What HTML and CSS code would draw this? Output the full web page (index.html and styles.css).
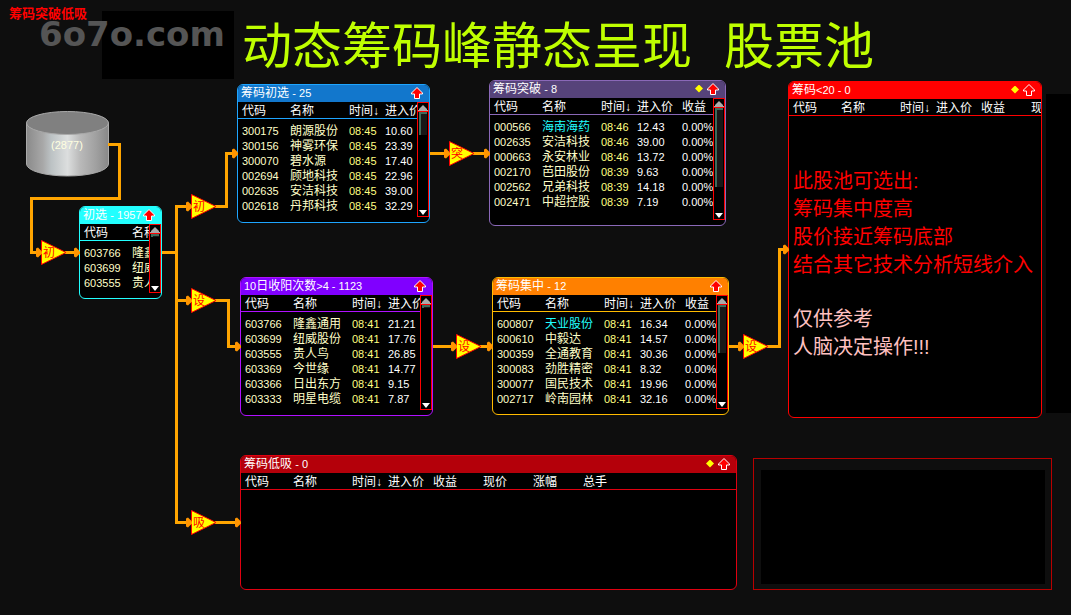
FILE: index.html
```html
<!DOCTYPE html>
<html lang="zh-CN">

<head>
	<meta charset="utf-8">
	<meta name="viewport" content="width=device-width, initial-scale=1.0">
	<title>筹码突破低吸</title>
	<link rel="stylesheet" href="styles.css">
</head>

<body>
	<svg class="defs" aria-hidden="true">
		<symbol id="up" viewBox="0 0 12 12">
			<path d="M6 0.500 L11.500 6 V7 H8.500 V11.500 H3.500 V7 H0.500 V6 Z" stroke-width="1"/>
		</symbol>
	</svg>

	<main class="board">
		<div class="shade shade-top"></div>
		<div class="shade shade-right"></div>
		<p class="name">筹码突破低吸</p>
		<p class="mark">6o7o.com</p>
		<h1 class="headline"><span>动态筹码峰静态呈现</span> <span>股票池</span></h1>

		<section class="node node-start">
			<h2 class="title"><span class="label">初选 <span class="num">- 1957</span></span><svg class="up"><use href="#up"/></svg></h2>
			<div class="body">
				<div class="list">
					<table>
						<thead><tr><th>代码</th><th>名称</th></tr></thead>
						<tbody>
							<tr><td>603766</td><td>隆鑫通用</td></tr>
							<tr><td>603699</td><td>纽威股份</td></tr>
							<tr><td>603555</td><td>贵人鸟</td></tr>
						</tbody>
					</table>
				</div>
				<div class="scroll"><i class="thumb thumb-min"></i></div>
			</div>
		</section>

		<section class="node node-first">
			<h2 class="title"><span class="label">筹码初选 <span class="num">- 25</span></span><svg class="up"><use href="#up"/></svg></h2>
			<div class="body">
				<div class="list">
					<table>
						<thead><tr><th>代码</th><th>名称</th><th>时间↓</th><th>进入价</th></tr></thead>
						<tbody>
							<tr><td>300175</td><td>朗源股份</td><td>08:45</td><td>10.60</td></tr>
							<tr><td>300156</td><td>神雾环保</td><td>08:45</td><td>23.39</td></tr>
							<tr><td>300070</td><td>碧水源</td><td>08:45</td><td>17.40</td></tr>
							<tr><td>002694</td><td>顾地科技</td><td>08:45</td><td>22.96</td></tr>
							<tr><td>002635</td><td>安洁科技</td><td>08:45</td><td>39.00</td></tr>
							<tr><td>002618</td><td>丹邦科技</td><td>08:45</td><td>32.29</td></tr>
						</tbody>
					</table>
				</div>
				<div class="scroll"><i class="thumb thumb-short"></i></div>
			</div>
		</section>

		<section class="node node-break">
			<h2 class="title"><span class="label">筹码突破 <span class="num">- 8</span></span><i class="dot"></i><svg class="up"><use href="#up"/></svg></h2>
			<div class="body">
				<div class="list">
					<table>
						<thead><tr><th>代码</th><th>名称</th><th>时间↓</th><th>进入价</th><th>收益</th></tr></thead>
						<tbody>
							<tr class="new"><td>000566</td><td>海南海药</td><td>08:46</td><td>12.43</td><td>0.00%</td></tr>
							<tr><td>002635</td><td>安洁科技</td><td>08:46</td><td>39.00</td><td>0.00%</td></tr>
							<tr><td>000663</td><td>永安林业</td><td>08:46</td><td>13.72</td><td>0.00%</td></tr>
							<tr><td>002170</td><td>芭田股份</td><td>08:39</td><td>9.63</td><td>0.00%</td></tr>
							<tr><td>002562</td><td>兄弟科技</td><td>08:39</td><td>14.18</td><td>0.00%</td></tr>
							<tr><td>002471</td><td>中超控股</td><td>08:39</td><td>7.19</td><td>0.00%</td></tr>
						</tbody>
					</table>
				</div>
				<div class="scroll"><i class="thumb thumb-long"></i></div>
			</div>
		</section>

		<section class="node node-days">
			<h2 class="title"><span class="label"><span class="num">10</span>日收阳次数<span class="num">&gt;4 - 1123</span></span><svg class="up"><use href="#up"/></svg></h2>
			<div class="body">
				<div class="list">
					<table>
						<thead><tr><th>代码</th><th>名称</th><th>时间↓</th><th>进入价</th></tr></thead>
						<tbody>
							<tr><td>603766</td><td>隆鑫通用</td><td>08:41</td><td>21.21</td></tr>
							<tr><td>603699</td><td>纽威股份</td><td>08:41</td><td>17.76</td></tr>
							<tr><td>603555</td><td>贵人鸟</td><td>08:41</td><td>26.85</td></tr>
							<tr><td>603369</td><td>今世缘</td><td>08:41</td><td>14.77</td></tr>
							<tr><td>603366</td><td>日出东方</td><td>08:41</td><td>9.15</td></tr>
							<tr><td>603333</td><td>明星电缆</td><td>08:41</td><td>7.87</td></tr>
						</tbody>
					</table>
				</div>
				<div class="scroll"><i class="thumb thumb-min"></i></div>
			</div>
		</section>

		<section class="node node-focus">
			<h2 class="title"><span class="label">筹码集中 <span class="num">- 12</span></span><svg class="up"><use href="#up"/></svg></h2>
			<div class="body">
				<div class="list">
					<table>
						<thead><tr><th>代码</th><th>名称</th><th>时间↓</th><th>进入价</th><th>收益</th></tr></thead>
						<tbody>
							<tr class="new"><td>600807</td><td>天业股份</td><td>08:41</td><td>16.34</td><td>0.00%</td></tr>
							<tr><td>600610</td><td>中毅达</td><td>08:41</td><td>14.57</td><td>0.00%</td></tr>
							<tr><td>300359</td><td>全通教育</td><td>08:41</td><td>30.36</td><td>0.00%</td></tr>
							<tr><td>300083</td><td>劲胜精密</td><td>08:41</td><td>8.32</td><td>0.00%</td></tr>
							<tr><td>300077</td><td>国民技术</td><td>08:41</td><td>19.96</td><td>0.00%</td></tr>
							<tr><td>002717</td><td>岭南园林</td><td>08:41</td><td>32.16</td><td>0.00%</td></tr>
						</tbody>
					</table>
				</div>
				<div class="scroll"><i class="thumb thumb-mid"></i></div>
			</div>
		</section>

		<section class="node node-under">
			<h2 class="title"><span class="label">筹码<span class="num">&lt;20 - 0</span></span><i class="dot"></i><svg class="up"><use href="#up"/></svg></h2>
			<div class="body">
				<div class="list">
					<table>
						<thead><tr><th>代码</th><th>名称</th><th>时间↓</th><th>进入价</th><th>收益</th><th>现价</th></tr></thead>
					</table>
					<div class="note">
						<p>此股池可选出:<br>筹码集中度高<br>股价接近筹码底部<br>结合其它技术分析短线介入</p>
						<p class="hint">仅供参考<br>人脑决定操作!!!</p>
					</div>
				</div>
			</div>
		</section>

		<section class="node node-low">
			<h2 class="title"><span class="label">筹码低吸 <span class="num">- 0</span></span><i class="dot"></i><svg class="up"><use href="#up"/></svg></h2>
			<div class="body">
				<div class="list">
					<table>
						<thead><tr><th>代码</th><th>名称</th><th>时间↓</th><th>进入价</th><th>收益</th><th>现价</th><th>涨幅</th><th>总手</th></tr></thead>
					</table>
				</div>
			</div>
		</section>

		<div class="blank"></div>

		<svg class="links" width="1071" height="615" viewBox="0 0 1071 615">
			<defs>
				<linearGradient id="steel">
					<stop offset="0" stop-color="#8a8a8a"/>
					<stop offset=".2" stop-color="#a8a8a8"/>
					<stop offset=".3" stop-color="#bcc2c4"/>
					<stop offset=".5" stop-color="#dcdede"/>
					<stop offset=".65" stop-color="#bababa"/>
					<stop offset=".85" stop-color="#a0a0a0"/>
					<stop offset="1" stop-color="#888"/>
				</linearGradient>
				<path id="head" d="M-6 -4 L-4 -5 L0 -1 V1 L-4 5 L-6 4 Z"/>
				<path id="flag" d="M0.5 -12 L25 0 L0.5 12 Z"/>
			</defs>

			<!-- all stocks -->
			<path d="M26.500 123 V164 A41 12 0 0 0 108.500 164 V123 Z" fill="url(#steel)" stroke="#aaa"/>
			<ellipse cx="67.500" cy="123" rx="41" ry="11.500" fill="#808080" stroke="#aaa"/>
			<text class="count" x="67" y="149">(2877)</text>

			<g class="wire">
				<path d="M108 144.500 H119.500 V198.500 H31.500 V252.500 H37"/>
				<path d="M65 252.500 H76"/>
				<path d="M162 252.500 H176.500"/>
				<path d="M187 206.500 H176.500 V522.500 H187"/>
				<path d="M176.500 300.500 H187"/>
				<path d="M215 206.500 H226.500 V153.500 H232"/>
				<path d="M215 300.500 H228.500 V346.500 H236"/>
				<path d="M215 522.500 H236"/>
				<path d="M430 153.500 H445"/>
				<path d="M473 153.500 H485"/>
				<path d="M433 346.500 H452"/>
				<path d="M480 346.500 H488"/>
				<path d="M729 346.500 H739"/>
				<path d="M767 346.500 H779.500 V249.500 H784"/>
			</g>

			<g class="heads">
				<use href="#head" x="80" y="252.500"/>
				<use href="#head" x="238" y="153.500"/>
				<use href="#head" x="241" y="346.500"/>
				<use href="#head" x="241" y="522.500"/>
				<use href="#head" x="490" y="153.500"/>
				<use href="#head" x="493" y="346.500"/>
				<use href="#head" x="789" y="249.500"/>
			</g>

			<g class="flags">
				<use href="#flag" x="41" y="252.500"/>
				<use href="#flag" x="191" y="206.500"/>
				<use href="#flag" x="191" y="300.500"/>
				<use href="#flag" x="191" y="522.500"/>
				<use href="#flag" x="449" y="153.500"/>
				<use href="#flag" x="456" y="346.500"/>
				<use href="#flag" x="743" y="346.500"/>
			</g>

			<g class="heads">
				<use href="#head" x="42" y="252.500"/>
				<use href="#head" x="192" y="206.500"/>
				<use href="#head" x="192" y="300.500"/>
				<use href="#head" x="192" y="522.500"/>
				<use href="#head" x="450" y="153.500"/>
				<use href="#head" x="457" y="346.500"/>
				<use href="#head" x="744" y="346.500"/>
			</g>

			<g class="sign">
				<text x="49" y="257">初</text>
				<text x="199" y="211">初</text>
				<text x="199" y="305">设</text>
				<text x="199" y="527">吸</text>
				<text x="457" y="158">突</text>
				<text x="464" y="351">设</text>
				<text x="751" y="351">设</text>
			</g>
		</svg>
	</main>
</body>

</html>
```
FILE: styles.css
```css
* {
	box-sizing: border-box;
}

body {
	margin: 0;
	background: #0e0e0e;
	color: #fff;
	font: 12px/15px "Liberation Sans", "Noto Sans CJK SC", sans-serif;
}

p, h1, h2 {
	margin: 0;
	font-weight: normal;
}

.defs {
	display: none;
}

.board {
	position: relative;
	min-height: 100vh;
	overflow: hidden;
}

.links {
	position: absolute;
	left: 0;
	top: 0;
}

/* captions */

.name, .mark, .headline, .shade, .blank, .node {
	position: absolute;
}

.name {
	left: 9px;
	top: 6px;
	color: #f00;
	font-size: 13px;
	font-weight: bold;
}

.mark {
	left: 39px;
	top: 14px;
	color: #555;
	font: bold 34px/40px "DejaVu Sans", sans-serif;
}

.headline {
	display: flex;
	gap: 32px;
	left: 242px;
	top: 17px;
	color: #bfff00;
	font-size: 50px;
	line-height: 60px;
	white-space: nowrap;
}

.shade {
	background: #000;
}

.shade-top {
	left: 102px;
	top: 11px;
	width: 132px;
	height: 68px;
}

.shade-right {
	left: 1046px;
	right: 0;
	top: 94px;
	height: 319px;
}

.blank {
	left: 753px;
	top: 458px;
	width: 299px;
	height: 132px;
	padding: 11px 6px 5px 7px;
	border: 1px solid #b80000;
}

.blank::before {
	content: "";
	display: block;
	height: 100%;
	background: #000;
}

/* nodes */

.node {
	display: flex;
	flex-direction: column;
	border: 1px solid var(--line);
	border-radius: 6px;
	background: #000;
	overflow: hidden;
}

.node-start {
	--line: #2ff;
	--bar: #2ff;
	left: 79px;
	top: 206px;
	width: 83px;
	height: 93px;
}

.node-first {
	--line: #1ea5ff;
	--bar: #1277cc;
	left: 237px;
	top: 84px;
	width: 193px;
	height: 139px;
}

.node-break {
	--line: #8a68b8;
	--bar: #56437a;
	left: 489px;
	top: 80px;
	width: 237px;
	height: 146px;
}

.node-days {
	--line: #b010ff;
	--bar: #8000ff;
	left: 240px;
	top: 277px;
	width: 193px;
	height: 139px;
}

.node-focus {
	--line: #fb0;
	--bar: #ff8000;
	left: 492px;
	top: 277px;
	width: 237px;
	height: 138px;
}

.node-under {
	--line: #f00;
	--bar: #f00;
	left: 788px;
	top: 81px;
	width: 254px;
	height: 337px;
}

.node-low {
	--line: #e00010;
	--bar: #b4000a;
	left: 240px;
	top: 455px;
	width: 497px;
	height: 135px;
}

.title {
	display: flex;
	align-items: center;
	gap: 4px;
	height: 17px;
	flex: none;
	padding: 0 6px 0 3px;
	background: var(--bar);
	font-size: 12px;
	white-space: nowrap;
}

.label {
	flex: 1;
	min-width: 0;
}

.num {
	font-size: 11px;
}

.up {
	flex: none;
	width: 12px;
	height: 12px;
	margin-bottom: 2px;
	fill: #f00;
	stroke: #fff;
}

.dot {
	flex: none;
	width: 8px;
	height: 8px;
	margin-bottom: 2px;
	background: #ff0;
	clip-path: polygon(50% 0, 100% 50%, 50% 100%, 0 50%);
}

.body {
	display: flex;
	flex: 1;
	min-height: 0;
}

.list {
	flex: 1;
	min-width: 0;
	overflow: hidden;
}

table {
	table-layout: fixed;
	width: 496px;
	border-collapse: separate;
	border-spacing: 0;
}

th, td {
	padding: 0;
	text-align: left;
	font-weight: normal;
	white-space: nowrap;
}

th {
	height: 17px;
	width: 50px;
	padding-top: 2px;
	border-bottom: 1px solid var(--line);
	line-height: 14px;
}

th:nth-child(1) {
	width: 52px;
}

th:nth-child(2) {
	width: 59px;
}

th:nth-child(3) {
	width: 36px;
}

th:nth-child(4) {
	width: 45px;
}

th:last-child {
	width: auto;
}

th:first-child, td:first-child {
	padding-left: 4px;
}

tbody::before {
	content: "";
	display: block;
	height: 5px;
}

td {
	height: 15px;
	font-size: 11px;
	color: #fff;
}

td:nth-child(1), td:nth-child(2) {
	color: #ffffc8;
}

td:nth-child(2) {
	font-size: 12px;
}

td:nth-child(3) {
	color: #ffff80;
}

.new td:nth-child(2) {
	color: #2ff;
}

/* scroll bar drawn beside a list */

.scroll {
	display: flex;
	flex-direction: column;
	flex: none;
	width: 12px;
	margin-bottom: 5px;
	border: 1px solid #f00;
}

.scroll::before {
	content: "";
	height: 8px;
	background: #aaa;
	border-bottom: 1px solid #f00;
	clip-path: polygon(50% 2px, 90% 6px, 90% 7px, 100% 7px, 100% 100%, 0 100%, 0 7px, 10% 7px, 10% 6px);
}

.scroll::after {
	content: "";
	height: 5px;
	margin: auto 1px 1px;
	background: #fff;
	clip-path: polygon(0 0, 100% 0, 50% 100%);
}

.thumb {
	width: 8px;
	margin-left: 1px;
	border: 1px solid #3f6b5c;
	border-width: 2px 0 0 2px;
	background: #181818;
}

.thumb-min {
	height: 3px;
}

.thumb-short {
	height: 23px;
}

.thumb-mid {
	height: 48px;
}

.thumb-long {
	height: 79px;
}

.note {
	margin-top: 51px;
	padding-left: 4px;
	color: #f00;
	font-size: 20px;
	line-height: 28px;
	white-space: nowrap;
}

.hint {
	margin-top: 26px;
	color: #ffc0c0;
}

/* connectors */

.wire {
	fill: none;
	stroke: #ffa500;
	stroke-width: 3;
}

.heads {
	fill: #ff9500;
}

.flags {
	fill: #ff0;
	stroke: #f00;
}

.sign {
	fill: #f00;
	text-anchor: middle;
}

.count {
	fill: #ffffe0;
	font-size: 11px;
	text-anchor: middle;
}
```
